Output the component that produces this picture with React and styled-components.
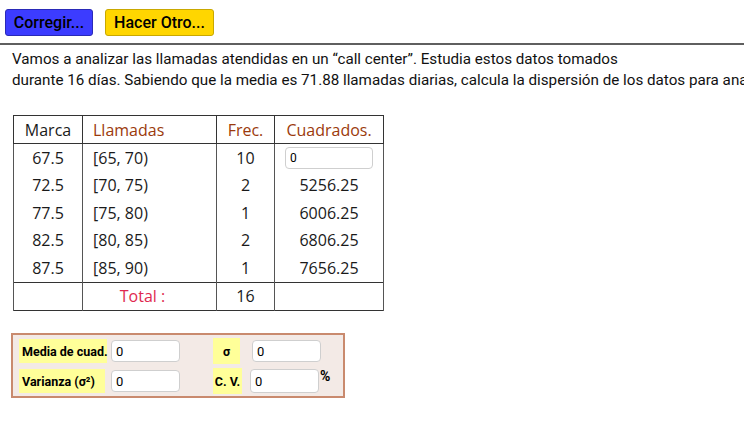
import React from "react";
import styled, { createGlobalStyle } from "styled-components";

const GlobalStyle = createGlobalStyle`
  html, body {
    margin: 0;
    padding: 0;
    background: #ffffff;
  }
  body {
    font-family: Roboto, "Liberation Sans", sans-serif;
    color: #000;
    overflow: hidden;
  }
`;

const rows = [
  { marca: "67.5", intervalo: "[65, 70)", frec: "10", cuad: null },
  { marca: "72.5", intervalo: "[70, 75)", frec: "2", cuad: "5256.25" },
  { marca: "77.5", intervalo: "[75, 80)", frec: "1", cuad: "6006.25" },
  { marca: "82.5", intervalo: "[80, 85)", frec: "2", cuad: "6806.25" },
  { marca: "87.5", intervalo: "[85, 90)", frec: "1", cuad: "7656.25" },
];

const App = () => {
  return (
    <Page>
      <GlobalStyle />
      <Toolbar>
        <ActionButton $variant="blue">Corregir...</ActionButton>
        <ActionButton $variant="yellow">Hacer Otro...</ActionButton>
      </Toolbar>
      <Statement>
        <Line>
          Vamos a analizar las llamadas atendidas en un “call center”. Estudia
          estos datos tomados
        </Line>
        <Line>
          durante 16 días. Sabiendo que la media es 71.88 llamadas diarias,
          calcula la dispersión de los datos para analizarlos.
        </Line>
      </Statement>

      <DataTable>
        <colgroup>
          <col style={{ width: 69 }} />
          <col style={{ width: 134 }} />
          <col style={{ width: 58 }} />
          <col style={{ width: 109 }} />
        </colgroup>
        <thead>
          <tr>
            <HeadCell $align="center">Marca</HeadCell>
            <HeadCell $accent $align="left">
              Llamadas
            </HeadCell>
            <HeadCell $accent $align="center">
              Frec.
            </HeadCell>
            <HeadCell $accent $align="center">
              Cuadrados.
            </HeadCell>
          </tr>
        </thead>
        <tbody>
          {rows.map((row, i) => (
            <tr key={i}>
              <Cell $align="center">{row.marca}</Cell>
              <Cell $align="left">{row.intervalo}</Cell>
              <Cell $align="center">{row.frec}</Cell>
              <Cell $align="center">
                {row.cuad === null ? (
                  <CellInput defaultValue="0" />
                ) : (
                  row.cuad
                )}
              </Cell>
            </tr>
          ))}
          <TotalRow>
            <Cell />
            <Cell $align="center">
              <TotalLabel>Total :</TotalLabel>
            </Cell>
            <Cell $align="center">16</Cell>
            <Cell />
          </TotalRow>
        </tbody>
      </DataTable>

      <ResultPanel>
        <PanelRow>
          <Field $gap={4}>
            <Label $width={88}>Media de cuad.</Label>
            <ValueInput defaultValue="0" />
          </Field>
          <Field $gap={12}>
            <Label $width={27} $center $tall>
              σ
            </Label>
            <ValueInput defaultValue="0" />
          </Field>
        </PanelRow>
        <PanelRow>
          <Field $gap={4}>
            <Label $width={86}>Varianza (σ²)</Label>
            <ValueInput defaultValue="0" $offset={2} />
          </Field>
          <Field $gap={8}>
            <Label $width={29} $center $tall>
              C. V.
            </Label>
            <ValueInput defaultValue="0" $tallInput />
            <Unit>%</Unit>
          </Field>
        </PanelRow>
      </ResultPanel>
    </Page>
  );
};
export default App;

const Page = styled.div`
  width: 744px;
  height: 446px;
  overflow: hidden;
`;

const Toolbar = styled.div`
  display: flex;
  gap: 12px;
  padding: 9px 5px 7px 5px;
  border-bottom: 2px solid #5f5f5f;
`;

const ActionButton = styled.button`
  height: 27px;
  padding: 0;
  border-radius: 3px;
  font-family: Roboto, "Liberation Sans", sans-serif;
  font-size: 16px;
  font-weight: 500;
  white-space: nowrap;
  color: #000;
  cursor: pointer;
  background: ${(p) => (p.$variant === "blue" ? "#3c3cff" : "#ffd600")};
  border: 1px solid ${(p) => (p.$variant === "blue" ? "#2a2ab8" : "#c9a800")};
  width: ${(p) => (p.$variant === "blue" ? "88px" : "109px")};
`;

const Statement = styled.div`
  padding: 4px 0 0 12px;
  font-size: 15.2px;
  line-height: 21px;
  color: #111;
`;

const Line = styled.div`
  white-space: nowrap;
`;

const DataTable = styled.table`
  margin: 24px 0 0 13px;
  border-collapse: collapse;
  table-layout: fixed;
  width: 371px;
  font-family: "Open Sans", "DejaVu Sans", sans-serif;
  font-size: 16px;
  color: #1a1a1a;
  border: 1px solid #333;
`;

const HeadCell = styled.th`
  height: 27px;
  padding: 0 10px;
  font-weight: 400;
  text-align: ${(p) => p.$align};
  color: ${(p) => (p.$accent ? "#9b3a0c" : "#1a1a1a")};
  border: 1px solid #333;
`;

const Cell = styled.td`
  height: 27.5px;
  padding: 0 10px;
  text-align: ${(p) => p.$align || "center"};
  border-left: 1px solid #555;
  border-right: 1px solid #555;
  vertical-align: middle;
`;

const TotalRow = styled.tr`
  td {
    border-top: 1px solid #333;
    height: 27px;
  }
`;

const TotalLabel = styled.span`
  color: #e0284f;
  margin-right: 14px;
`;

const CellInput = styled.input`
  display: block;
  box-sizing: border-box;
  width: 88px;
  height: 22px;
  margin: 0 auto 0 0;
  padding: 0 4px;
  border: 1px solid #cfcfcf;
  border-radius: 4px;
  font-family: Roboto, "Liberation Sans", sans-serif;
  font-size: 12px;
  color: #000;
  background: #fff;
  outline: none;
`;

const ResultPanel = styled.div`
  box-sizing: border-box;
  width: 334px;
  height: 65px;
  margin: 22px 0 0 11px;
  padding: 3px 0 0 6px;
  background: #f3eae6;
  border: 2px solid #c98a6e;
  display: flex;
  flex-direction: column;
  gap: 4px;
`;

const PanelRow = styled.div`
  display: flex;
  align-items: center;
  gap: 33px;
`;

const Field = styled.div`
  display: flex;
  align-items: center;
  gap: ${(p) => p.$gap}px;
`;

const Label = styled.div`
  box-sizing: border-box;
  width: ${(p) => p.$width}px;
  height: ${(p) => (p.$tall ? 26 : 24)}px;
  display: flex;
  align-items: center;
  justify-content: ${(p) => (p.$center ? "center" : "flex-start")};
  padding: 1px 3px 0 3px;
  background: #ffff99;
  font-family: Roboto, "Liberation Sans", sans-serif;
  font-size: 12.5px;
  font-weight: 700;
  color: #000;
  white-space: nowrap;
`;

const ValueInput = styled.input`
  box-sizing: border-box;
  width: 69px;
  height: ${(p) => (p.$tallInput ? 24 : 22)}px;
  margin-left: ${(p) => p.$offset || 0}px;
  padding: 2px 4px 0 4px;
  border: 1px solid #cfcfcf;
  border-radius: 4px;
  font-family: Roboto, "Liberation Sans", sans-serif;
  font-size: 13px;
  color: #000;
  background: #fff;
  outline: none;
`;

const Unit = styled.div`
  font-family: Roboto, "Liberation Sans", sans-serif;
  font-size: 14px;
  font-weight: 700;
  align-self: flex-start;
  margin-left: -7px;
`;
